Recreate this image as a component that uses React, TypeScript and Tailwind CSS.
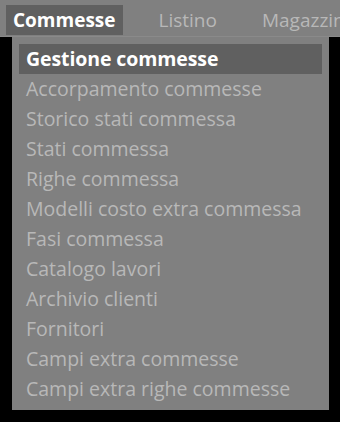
import React from "react";

const items = [
  "Gestione commesse",
  "Accorpamento commesse",
  "Storico stati commessa",
  "Stati commessa",
  "Righe commessa",
  "Modelli costo extra commessa",
  "Fasi commessa",
  "Catalogo lavori",
  "Archivio clienti",
  "Fornitori",
  "Campi extra commesse",
  "Campi extra righe commesse",
];

export default function App() {
  return (
    <div
      className="w-[340px] h-[422px] bg-black overflow-hidden flex flex-col"
      style={{ fontFamily: '"Open Sans", sans-serif' }}
    >
      <div className="h-[37px] bg-[#808080] border-b border-[#8a8a8a] flex items-start gap-[30px] pt-[5px] pl-[6px] whitespace-nowrap overflow-hidden">
        <div className="h-[30px] bg-[#606060] flex items-center px-[7px] text-white font-bold text-[19px]">
          Commesse
        </div>
        <div className="h-[30px] flex items-center px-[6px] text-[#b8b8b8] text-[19px]">
          Listino
        </div>
        <div className="h-[30px] flex items-center pl-[9px] pr-[7px] text-[#b8b8b8] text-[19px]">
          Magazzino
        </div>
      </div>
      <div className="ml-[12px] w-[317px] bg-[#808080] pt-[7px] pb-[6px] px-[7px] flex flex-col">
        {items.map((t, i) => (
          <div
            key={t}
            className={
              "h-[30px] flex items-center pl-[7px] whitespace-nowrap text-[19.5px] " +
              (i === 0 ? "bg-[#606060] text-white font-bold tracking-[-0.1px]" : "text-[#b8b8b8]")
            }
          >
            {t}
          </div>
        ))}
      </div>
    </div>
  );
}
